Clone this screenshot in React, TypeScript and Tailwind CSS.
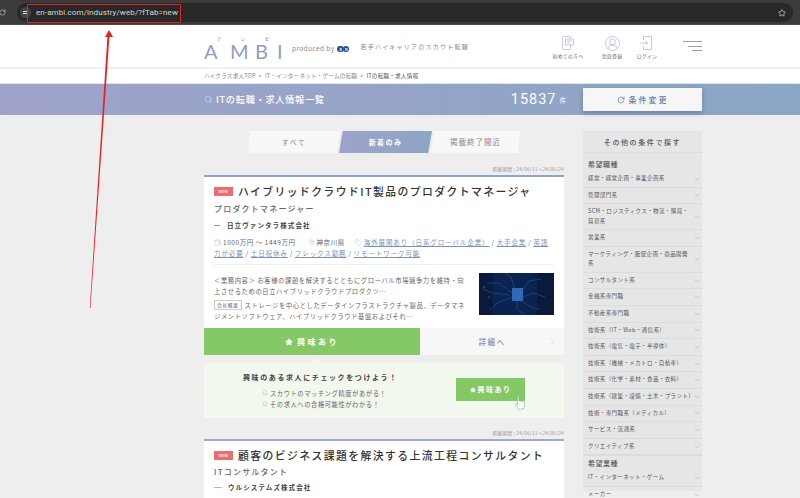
import React from "react";
import { RotateCw, Star, Search, ChevronDown, ChevronRight, MapPin, Tag, Wallet, Bell } from "lucide-react";

const jobTypes = [
  "経営・経営企画・事業企画系",
  "管理部門系",
  "SCM・ロジスティクス・物流・購買・貿易系",
  "営業系",
  "マーケティング・販促企画・商品開発系",
  "コンサルタント系",
  "金融系専門職",
  "不動産系専門職",
  "技術系（IT・Web・通信系）",
  "技術系（電気・電子・半導体）",
  "技術系（機械・メカトロ・自動車）",
  "技術系（化学・素材・食品・衣料）",
  "技術系（建築・設備・土木・プラント）",
  "技術・専門職系（メディカル）",
  "サービス・流通系",
  "クリエイティブ系",
];

function SideRow({ label }: { label: string }) {
  return (
    <div className="flex items-center justify-between border-b border-[#dcdcdc] py-[3px] pl-[5px] pr-[1px] min-h-[16.6px]">
      <span className="text-[5.5px] leading-[9.5px] tracking-[0.4px] text-[#555] max-w-[105px]">{label}</span>
      <ChevronDown size={8} strokeWidth={1} className="shrink-0 text-[#999]" />
    </div>
  );
}

function Period() {
  return (
    <p className="text-right text-[4.8px] leading-[6px] text-[#999] tracking-[0.2px] pb-[3px]">
      掲載期間 : 24/06/11〜24/06/24
    </p>
  );
}

function NewBadge() {
  return (
    <span className="inline-flex items-center justify-center w-[19px] h-[9px] bg-[#ee6b6e] text-white text-[3.5px] font-bold tracking-[0.5px] shrink-0">
      NEW
    </span>
  );
}

function Circuit() {
  return (
    <svg viewBox="0 0 75 42" className="w-[75px] h-[42px] shrink-0">
      <rect width="75" height="42" fill="#0c2250" />
      <rect x="0" y="0" width="14" height="42" fill="#0a1a3d" />
      <rect x="58" y="0" width="17" height="42" fill="#0a1a3d" />
      <g stroke="#1c5a9c" strokeWidth="0.6" fill="none">
        <path d="M33 20 L20 10 L8 10 M33 24 L18 30 L10 38 M43 18 L50 8 L62 6 M44 24 L54 20 L66 24 M38 28 L38 36 L46 42 M36 16 L32 4 L26 0 M42 28 L52 34 L60 36 M30 22 L14 20 L4 16" />
      </g>
      <rect x="33" y="15" width="11" height="13" fill="#2c6cb4" />
      <circle cx="5" cy="14" r="0.6" fill="#8cc4f0" />
      <circle cx="10" cy="24" r="0.5" fill="#8cc4f0" />
    </svg>
  );
}

function Hand() {
  return (
    <svg viewBox="0 0 14 18" className="absolute left-[58px] top-[17px] w-[12px] h-[16px]">
      <path
        d="M4 1.5 C4 0.6 5.6 0.6 5.6 1.5 L5.8 6.5 L8 6.8 L11 7.6 C12.4 8 12.6 9 12.4 10.4 L11.6 15.5 L5.5 16.5 L1.8 11 C1.2 10 2.4 9.2 3.2 10 L4.4 11 Z"
        fill="#fff"
        stroke="#7fa878"
        strokeWidth="0.7"
      />
    </svg>
  );
}

function Annotation() {
  return (
    <>
      <div className="absolute left-[27px] top-[4px] w-[154px] h-[19px] border-[1.5px] border-[#e8211d] rounded-[1px]" />
      <svg viewBox="0 0 800 498" className="absolute left-0 top-0 w-[800px] h-[498px] pointer-events-none">
        <polygon points="109,30 113,37 109.4,37 90.4,308 89.8,308 107.4,37 105,37" fill="#e8211d" />
      </svg>
    </>
  );
}

export default function App() {
  return (
    <div
      className="relative w-[800px] h-[498px] overflow-hidden bg-[#eeeeee]"
      style={{ fontFamily: '"Noto Sans CJK JP", "Noto Sans", sans-serif' }}
    >
      {/* browser bar */}
      <div className="h-[25px] bg-[#3a3b3d] flex items-center gap-[11px] pt-[1px] border-b-[1px] border-[#4a4a4a]">
        <RotateCw size={7} className="text-[#cfcfcf] -ml-[1px] shrink-0" />
        <div className="flex-1 mr-[7px] h-[19px] rounded-full bg-[#282828] flex items-center pl-[3px] pr-[7px]">
          <span className="w-[11px] h-[11px] rounded-full bg-[#444] flex flex-col items-center justify-center gap-[1.5px] shrink-0">
            <span className="w-[5px] h-px bg-[#ddd]" />
            <span className="w-[5px] h-px bg-[#ddd]" />
          </span>
          <span className="ml-[5px] text-[8px] text-[#d8d8d8] font-['Roboto'] tracking-[0.1px]">en-ambi.com/industry/web/?fTab=new</span>
          <Star size={8} className="ml-auto text-[#e0e0e0]" />
        </div>
      </div>

      {/* site header */}
      <header className="h-[42px] bg-white">
        <div className="w-[498px] ml-[204px] h-full flex items-center">
          <div className="w-[88px] pt-[4px]">
            <p className="ml-[13px] flex text-[4px] leading-[6px] text-[#666]">
              <span className="w-[24px]">ア</span><span className="w-[24px]">ン</span><span>ビ</span>
            </p>
            <p className="flex text-[20px] leading-[18px] font-['Lato'] font-normal text-[#8aa0c5]">
              <span className="w-[26px]">A</span><span className="w-[25px]">M</span><span className="w-[22px]">B</span><span>I</span>
            </p>
          </div>
          <span className="text-[6.5px] mt-[6px] text-[#888] tracking-[0.4px] whitespace-nowrap">produced by</span>
          <span className="ml-[3px] mt-[6px] flex text-[4px] leading-[6px] font-bold text-white text-center">
            <span className="w-[6.5px] h-[6.5px] rounded-full bg-[#29508f]">e</span>
            <span className="w-[6.5px] h-[6.5px] rounded-full bg-[#29508f] -ml-[1px]">n</span>
          </span>
          <span className="ml-[11px] text-[6px] tracking-[1.25px] text-[#888] whitespace-nowrap">若手ハイキャリアのスカウト転職</span>
          <div className="ml-[78px] mt-[4px] w-[42px] shrink-0 flex flex-col items-center">
            <svg viewBox="0 0 14 14" className="w-[14px] h-[14px]" fill="none" stroke="#9aa8c8" strokeWidth="0.6">
              <rect x="1.5" y="0.5" width="8" height="13" rx="1" />
              <rect x="4.5" y="3" width="8" height="6" fill="#fff" />
              <path d="M6 5h5M6 7h3" />
            </svg>
            <span className="text-[4.8px] leading-[8px] tracking-[0.4px] text-[#666] mt-[2px] whitespace-nowrap">初めての方へ</span>
          </div>
          <div className="ml-[9px] mt-[4px] w-[28px] shrink-0 flex flex-col items-center">
            <svg viewBox="0 0 15 15" className="w-[15px] h-[15px]" fill="none" stroke="#9aa8c8" strokeWidth="0.6">
              <circle cx="7.5" cy="7.5" r="7" />
              <circle cx="7.5" cy="6" r="3" />
              <path d="M3 12.5c1-2.5 2.5-3.5 4.5-3.5s3.5 1 4.5 3.5" />
            </svg>
            <span className="text-[4.8px] leading-[8px] tracking-[0.4px] text-[#666] mt-[1.5px] whitespace-nowrap">会員登録</span>
          </div>
          <div className="ml-[7px] mt-[4px] w-[28px] shrink-0 flex flex-col items-center">
            <svg viewBox="0 0 14 14" className="w-[14px] h-[14px]" fill="none" stroke="#9aa8c8" strokeWidth="0.6">
              <path d="M3.5 4V0.5h8v13h-8V10" />
              <path d="M0.5 7h7M5.5 5l2 2-2 2" />
            </svg>
            <span className="text-[4.8px] leading-[8px] tracking-[0.4px] text-[#666] mt-[2px] whitespace-nowrap">ログイン</span>
          </div>
          <div className="ml-auto w-[20px] shrink-0 flex flex-col items-end gap-[3.5px]">
            <span className="w-[19px] h-px bg-[#8aa0c5]" />
            <span className="w-[14px] h-px bg-[#8aa0c5]" />
            <span className="w-[10px] h-px bg-[#8aa0c5]" />
          </div>
        </div>
      </header>

      {/* breadcrumb */}
      <div className="mt-[1px] h-[15px] bg-white border-t border-[#f0f0f0] border-b-0">
        <p className="ml-[204px] text-[5.6px] leading-[15px] text-[#888] tracking-[0.2px] flex gap-[3px]">
          <span>ハイクラス求人TOP</span><span>&gt;</span>
          <span>IT・インターネット・ゲームの転職</span><span>&gt;</span>
          <span className="text-[#555]">ITの転職・求人情報</span>
        </p>
      </div>

      {/* banner */}
      <div className="relative h-[32px] border-t border-[#dfe3ec] bg-gradient-to-r from-[#9fa2c9] to-[#8ba6c5]">
        <div className="ml-[204px] w-[498px] h-full flex items-center">
          <Search size={9} strokeWidth={1} className="text-white" />
          <span className="ml-[3px] text-[9.2px] font-medium tracking-[0.7px] text-white">ITの転職・求人情報一覧</span>
          <span className="ml-[auto] text-[14.5px] font-['Roboto'] tracking-[1px] text-white">15837</span>
          <span className="ml-[3px] mt-[3px] text-[6.5px] text-white">件</span>
          <button className="ml-[17px] w-[119px] h-[23px] bg-[#f6f6f6] shadow-[0_2px_5px_rgba(60,70,110,0.4)] flex items-center justify-center gap-[4px] text-[8px] font-medium tracking-[2px] text-[#6a7aa6]">
            <RotateCw size={8} />
            条件変更
          </button>
        </div>
      </div>

      {/* body */}
      <div className="ml-[204px] w-[498px] flex gap-[19px] pt-[16px]">
        <main className="w-[360px] shrink-0">
          <div className="ml-[44px] w-[272px] h-[22px] flex">
            <div className="w-[92px] bg-[#f8f8f8] [clip-path:polygon(2%_0,100%_0,97%_100%,0_100%)] flex items-center justify-center text-[7px] tracking-[1.4px] text-[#888]">すべて</div>
            <div className="w-[93px] -ml-[1px] bg-gradient-to-r from-[#9fa2c9] to-[#8ba6c5] [clip-path:polygon(4%_0,100%_0,96%_100%,0_100%)] flex items-center justify-center text-[7px] font-bold tracking-[1.4px] text-white">新着のみ</div>
            <div className="flex-1 -ml-[1px] bg-[#f8f8f8] [clip-path:polygon(3%_0,100%_0,98%_100%,0_100%)] flex items-center justify-center text-[7.5px] tracking-[1px] text-[#888]">掲載終了間近</div>
          </div>

          <div className="mt-[13px]"><Period /></div>
          <article className="bg-white border-t-2 border-[#8fa5c8]">
            <div className="px-[10px] pt-[7px]">
              <div className="flex items-center gap-[5px]">
                <NewBadge />
                <h2 className="text-[10.8px] leading-[15px] font-medium tracking-[1.45px] text-[#333] whitespace-nowrap">ハイブリッドクラウドIT製品のプロダクトマネージャ</h2>
              </div>
              <p className="mt-[3px] text-[8px] leading-[13px] font-medium tracking-[1.2px] text-[#666]">プロダクトマネージャー</p>
              <div className="mt-[4px] flex items-center text-[6.5px] leading-[12px] font-bold tracking-[1.1px] text-[#444]">
                <span className="w-[6px] h-[1px] bg-[#999] mr-[7px]" />
                日立ヴァンタラ株式会社
              </div>
              <div className="mt-[6px] text-[6.5px] leading-[10.5px] tracking-[0.55px] text-[#666] w-[337px]">
                <Wallet size={7} strokeWidth={1} className="inline -mt-[1px] text-[#999]" /> 1000万円 ～ 1449万円
                <MapPin size={7} strokeWidth={1} className="inline -mt-[1px] ml-[12px] text-[#999]" /> 神奈川県
                <Tag size={7} strokeWidth={1} className="inline -mt-[1px] ml-[10px] text-[#999]" />{" "}
                <span className="text-[#7c93b8] underline tracking-[0.9px]">海外展開あり（日系グローバル企業）</span> / <span className="text-[#7c93b8] underline tracking-[0.9px]">大手企業</span> / <span className="text-[#7c93b8] underline tracking-[0.9px]">英語力が必要</span> / <span className="text-[#7c93b8] underline tracking-[0.9px]">土日祝休み</span> / <span className="text-[#7c93b8] underline tracking-[0.9px]">フレックス勤務</span> / <span className="text-[#7c93b8] underline tracking-[0.9px]">リモートワーク可能</span>
              </div>
              <div className="mt-[6px] border-t border-[#eeeeee] pt-[8px] flex gap-[12px]">
                <div className="flex-1 pt-[3px] text-[6.3px] leading-[10.5px] tracking-[0.6px] text-[#666]">
                  <p className="h-[21px] overflow-hidden">＜業務内容＞ お客様の課題を解決するとともにグローバル市場競争力を維持・向上させるための日立ハイブリッドクラウドプロダクツ…</p>
                  <p className="mt-[3px]">
                    <span className="inline-block border border-[#ccc] px-[2px] leading-[8px] text-[4.8px] mr-[3px] align-[1px]">会社概要</span>
                    ストレージを中心としたデータインフラストラクチャ製品、データマネジメントソフトウェア、ハイブリッドクラウド基盤およびそれ…
                  </p>
                </div>
                <Circuit />
              </div>
            </div>
            <div className="mt-[6px] h-[27px] flex">
              <div className="w-[216px] bg-[#85c866] flex items-center justify-center gap-[4px] text-[8px] font-bold tracking-[2.5px] text-white">
                <Star size={8} fill="white" stroke="white" />
                興味あり
              </div>
              <div className="relative flex-1 bg-[#f7f7f7] flex items-center justify-center text-[7.5px] font-medium tracking-[1.5px] text-[#7f8fbd]">
                詳細へ
                <ChevronRight size={11} strokeWidth={0.8} className="absolute right-[6px] top-[8px] text-[#bbb]" />
              </div>
            </div>
          </article>

          <div className="relative mt-[8px] h-[55px] bg-[#f3f8ef] flex">
            <span className="absolute -top-[5px] left-[105px] w-0 h-0 border-x-[6px] border-x-transparent border-b-[5px] border-b-[#f3f8ef]" />
            <div className="w-[196px] pt-[9px] pl-[39px]">
              <p className="text-[7px] leading-[11px] font-bold tracking-[1.6px] text-[#444] whitespace-nowrap">興味のある求人にチェックをつけよう！</p>
              <p className="mt-[4.5px] ml-[19px] text-[6.3px] leading-[11px] tracking-[0.55px] text-[#666] whitespace-nowrap"><Bell size={6} strokeWidth={1.5} className="inline -mt-[1px] text-[#85c866]" /> スカウトのマッチング精度があがる！</p>
              <p className="ml-[19px] text-[6.3px] leading-[11px] tracking-[0.55px] text-[#666] whitespace-nowrap"><Bell size={6} strokeWidth={1.5} className="inline -mt-[1px] text-[#85c866]" /> その求人への合格可能性がわかる！</p>
            </div>
            <div className="relative ml-[56px] mt-[15px] w-[69px] h-[23px] bg-[#85c866] flex items-center justify-center gap-[2px] text-[7px] font-bold tracking-[1.5px] text-white">
              <Star size={6} fill="white" stroke="white" />
              興味あり
              <Hand />
            </div>
          </div>

          <div className="mt-[12px]"><Period /></div>
          <article className="bg-white border-t-2 border-[#9fa9cc] h-[70px] px-[10px] pt-[7px]">
            <div className="flex items-center gap-[5px]">
              <NewBadge />
              <h2 className="text-[10.8px] leading-[15px] font-medium tracking-[1.45px] text-[#333] whitespace-nowrap">顧客のビジネス課題を解決する上流工程コンサルタント</h2>
            </div>
            <p className="mt-[2px] text-[8px] leading-[13px] font-medium tracking-[1.2px] text-[#666]">ITコンサルタント</p>
            <div className="mt-[3px] flex items-center text-[6.5px] leading-[12px] font-bold tracking-[1.1px] text-[#444]">
              <span className="w-[8px] h-[1px] bg-[#a8cc88] mr-[6px]" />
              ウルシステムズ株式会社
            </div>
          </article>
        </main>

        <aside className="w-[119px] shrink-0 bg-[#e6e6e6] h-[360px]">
          <h3 className="h-[22px] border-b border-[#dcdcdc] text-center text-[7px] leading-[22px] font-medium tracking-[1.6px] text-[#555]">その他の条件で探す</h3>
          <p className="pl-[5px] pt-[5px] pb-[1px] text-[7px] leading-[12px] font-medium tracking-[0.5px] text-[#555]">希望職種</p>
          {jobTypes.map((t) => (
            <SideRow key={t} label={t} />
          ))}
          <p className="pl-[5px] pt-[1px] pb-[1px] text-[7px] leading-[12px] font-medium tracking-[0.5px] text-[#555] border-t border-[#dcdcdc]">希望業種</p>
          <SideRow label="IT・インターネット・ゲーム" />
          <SideRow label="メーカー" />
        </aside>
      </div>

      <Annotation />
    </div>
  );
}
